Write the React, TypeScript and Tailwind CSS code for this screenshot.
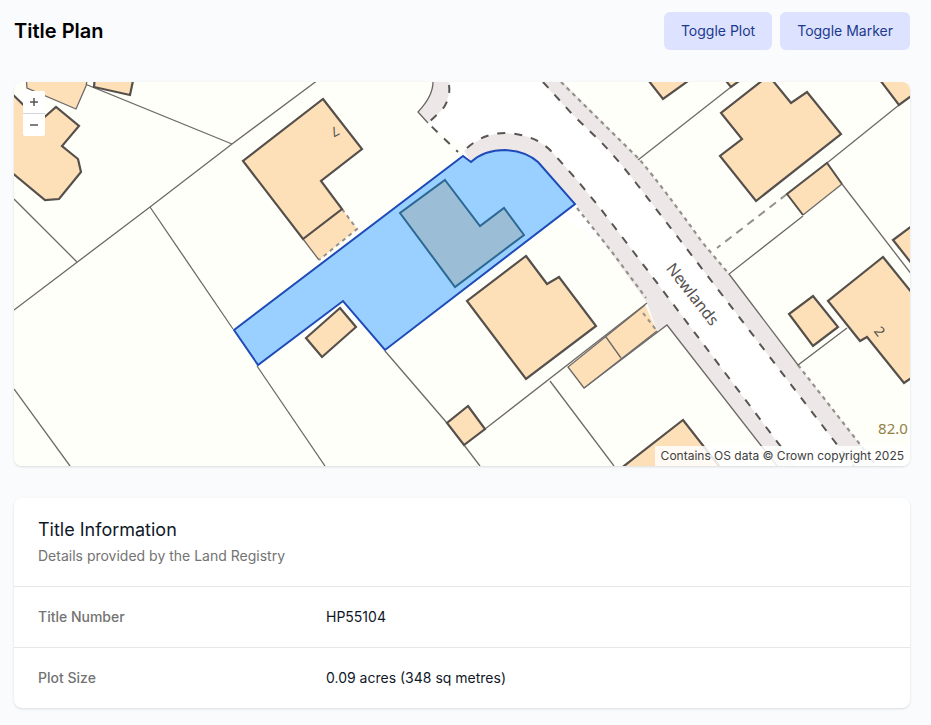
import { useState } from "react";

const LAND = "#fffffa";
const BUILDING = "#fee0b8";
const PAVEMENT = "#ede8e7";

// Outlined buildings
const buildings = [
  "323,99 362,149 321,181 342,209 303,239 243,161",
  "526,256 547,284 559,277 596,326 526,379 467,301",
  "468,406 485,429 464,445 447,423",
  "340,308 356,327 322,357 306,338",
  "683,420 730,480 606,480",
  "5,87 40,121 56,107 79,126 62,146 78,159 81,172 59,199 45,200 5,167",
  "95,76 94,87 130,95 134,76",
  "645,76 663,99 695,76",
  "722,76 731,87 746,76",
  "768,76 721,113 742,139 720,156 756,201 841,134 807,92 791,103 769,76",
  "877,76 899,105 930,82 930,70",
  "920,220 893,240 920,274",
  "883,257 920,303 920,372 904,383 867,337 860,341 828,301",
  "813,296 838,327 813,346 789,314",
];

// Property boundaries
const boundaries = [
  "14,310 150,207 232,144 318,80",
  "80,82 232,144",
  "14,199 77,262",
  "14,389 70,466",
  "150,207 233,329",
  "257,366 325,466",
  "385,351 447,423",
  "464,445 480,466",
  "485,429 647,303",
  "550,381 614,466",
  "584,388 667,325 777,466",
  "731,87 638,160",
  "899,105 827,163",
  "842,184 912,275",
  "803,216 729,274 798,365 847,328",
];

const rows = [
  { label: "Title Number", value: "HP55104" },
  { label: "Plot Size", value: "0.09 acres (348 sq metres)" },
];

function PlanDrawing({ showPlot, showMarker }: { showPlot: boolean; showMarker: boolean }) {
  return (
    <svg
      className="block h-full w-full"
      viewBox="14 82 896 384"
      preserveAspectRatio="xMidYMid slice"
      fill="none"
      role="img"
      aria-label="Title plan map"
    >
      <rect x="-500" y="0" width="2000" height="600" fill={LAND} />

      {/* Road and pavements */}
      <path
        d="M449 80Q451 98 442 110L428 123L467 150L640 270L790 470H882L798 365L729 274L702 242Q665 190 640 160L561 80Z"
        fill="#fff"
      />
      <path
        d="M433 80Q433 96 418 112L428 123L442 110Q451 98 449 80Z"
        fill={PAVEMENT}
      />
      <path
        d="M540 80L573 115L602 143Q620 162 636 183L680 240L858 472H882L798 365L729 274L702 242Q665 190 640 160L561 80Z"
        fill={PAVEMENT}
      />
      <path
        d="M464 151Q484 133 505 133Q535 134 552 152L577 180L600 208L642 263L797 468H779L667 325L657 331L647 303L576 204L533 156L505 149L471 162Z"
        fill={PAVEMENT}
      />
      <path d="M433 82Q433 96 418 112L428 123" stroke="#6b6563" strokeWidth="1.3" />
      <g stroke="#585452" strokeWidth="2" strokeDasharray="8 9">
        <path d="M449 85Q451 98 442 110L428 123L458 152" />
        <path d="M467 148Q484 133 505 133Q535 134 552 152L577 180L600 208L642 263L797 468" />
        <path d="M543 82L573 115L602 143Q620 162 636 183L680 240L855 468" />
      </g>
      <g stroke="#96908d" strokeWidth="2.2" strokeDasharray="4 4">
        <path d="M561 82L640 160Q665 190 702 242L729 274" />
        <path d="M577 208L612 252L646 298" />
        <path d="M798 365L880 470" />
      </g>

      {/* Boundaries */}
      <g stroke="#6d6967" strokeWidth="1.3">
        {boundaries.map((points) => (
          <polyline key={points} points={points} />
        ))}
      </g>
      <path d="M787 194L717 248" stroke="#96908d" strokeWidth="2" strokeDasharray="8 6" />

      {/* Garages and outbuildings */}
      <path d="M26 76L27 88L76 109L86 86L88 76Z" fill={BUILDING} stroke="#6d6967" strokeWidth="1.3" />
      <path d="M303 239L342 209L357 229L319 260Z" fill={BUILDING} />
      <path d="M303 239L319 260" stroke="#6d6967" strokeWidth="1.3" />
      <path d="M342 209L357 229L319 260" stroke="#96908d" strokeWidth="2" strokeDasharray="4 4" />
      <path d="M568 367L645 305L657 331L584 388Z" fill={BUILDING} />
      <path d="M645 305L568 367L584 388L657 331M606 337L621 358" stroke="#6d6967" strokeWidth="1.3" />
      <path d="M643 313L657 331" stroke="#96908d" strokeWidth="2" strokeDasharray="4 4" />
      <path d="M787 194L827 163L842 184L803 215Z" fill={BUILDING} />
      <path d="M803 215L842 184" stroke="#6d6967" strokeWidth="1.3" />
      <path d="M803 215L787 194L827 163L842 184" stroke="#56504c" strokeWidth="2" />

      <g fill={BUILDING} stroke="#56504c" strokeWidth="2.2">
        {buildings.map((points) => (
          <polygon key={points} points={points} />
        ))}
      </g>

      {/* Registered plot */}
      {showPlot && (
        <g strokeWidth="2">
          <path
            d="M234 330L463 156L471 162Q484 150 505 150Q526 151 538 162L575 204L385 350L343 301L258 365Z"
            fill="#99d0ff"
            stroke="#1f4bb8"
          />
          <path d="M445 180L480 226L504 208L524 235L455 287L400 213Z" fill="#9bbdd6" stroke="#2b6893" />
        </g>
      )}
      {showMarker && <circle cx="430" cy="280" r="6" fill="#1d4ed8" stroke="#fff" strokeWidth="2" />}

      {/* Labels */}
      <g className="font-['Noto_Sans',sans-serif]" fill="#56524f" textAnchor="middle" dominantBaseline="central">
        <text x="693" y="294" fontSize="16" transform="rotate(52 693 294)">Newlands</text>
        <text x="335" y="132" fontSize="13" transform="rotate(152 335 132)">7</text>
        <text x="880" y="331" fontSize="14" transform="rotate(52 880 331)">2</text>
        <text x="893" y="428" fontSize="15" fill="#8f8146">82.0</text>
      </g>
    </svg>
  );
}

export default function App() {
  const [showPlot, setShowPlot] = useState(true);
  const [showMarker, setShowMarker] = useState(false);
  const [zoom, setZoom] = useState(1);

  const buttonClass =
    "rounded-md border border-transparent bg-[#dde3fe] px-4 py-2 text-sm text-blue-900 hover:bg-indigo-200";

  return (
    <main className="min-h-screen bg-[#f9fbfd] pt-3 pr-[21px] pb-4 pl-3.5 font-['Inter',sans-serif]">
      <header className="flex items-center justify-between">
        <h1 className="text-xl font-semibold text-black">Title Plan</h1>
        <div className="flex gap-2">
          <button type="button" className={buttonClass} onClick={() => setShowPlot(!showPlot)}>
            Toggle Plot
          </button>
          <button type="button" className={buttonClass} onClick={() => setShowMarker(!showMarker)}>
            Toggle Marker
          </button>
        </div>
      </header>

      {/* Map */}
      <section className="relative mt-8 h-96 overflow-hidden rounded-lg shadow-sm">
        <div className="h-full" style={{ transform: `scale(${zoom})` }}>
          <PlanDrawing showPlot={showPlot} showMarker={showMarker} />
        </div>
        <div className="absolute top-[9px] left-[9px] flex flex-col divide-y divide-gray-300 rounded-xs bg-white">
          <button
            type="button"
            aria-label="Zoom in"
            className="flex h-[23px] w-[22px] items-center justify-center"
            onClick={() => setZoom(zoom * 1.25)}
          >
            <svg className="size-2" viewBox="0 0 8 8" stroke="#555" strokeWidth="1.5">
              <path d="M0 4H8M4 0V8" />
            </svg>
          </button>
          <button
            type="button"
            aria-label="Zoom out"
            className="flex h-[22px] w-[22px] items-center justify-center"
            onClick={() => setZoom(Math.max(1, zoom / 1.25))}
          >
            <svg className="size-2" viewBox="0 0 8 8" stroke="#555" strokeWidth="1.5">
              <path d="M0 4H8" />
            </svg>
          </button>
        </div>
        <p className="absolute right-0 bottom-0 bg-white/85 px-1.5 text-xs leading-5 text-neutral-700">
          Contains OS data © Crown copyright 2025
        </p>
      </section>

      {/* Title details */}
      <section className="mt-8 overflow-hidden rounded-lg bg-white shadow-sm">
        <div className="px-6 py-5">
          <h2 className="text-lg leading-6 text-gray-900">Title Information</h2>
          <p className="mt-1 text-sm text-neutral-500">Details provided by the Land Registry</p>
        </div>
        <dl>
          {rows.map((row) => (
            <div key={row.label} className="grid grid-cols-3 gap-4 border-t border-gray-200 px-6 py-5 text-sm">
              <dt className="font-medium text-neutral-500">{row.label}</dt>
              <dd className="col-span-2 text-gray-900">{row.value}</dd>
            </div>
          ))}
        </dl>
      </section>
    </main>
  );
}
